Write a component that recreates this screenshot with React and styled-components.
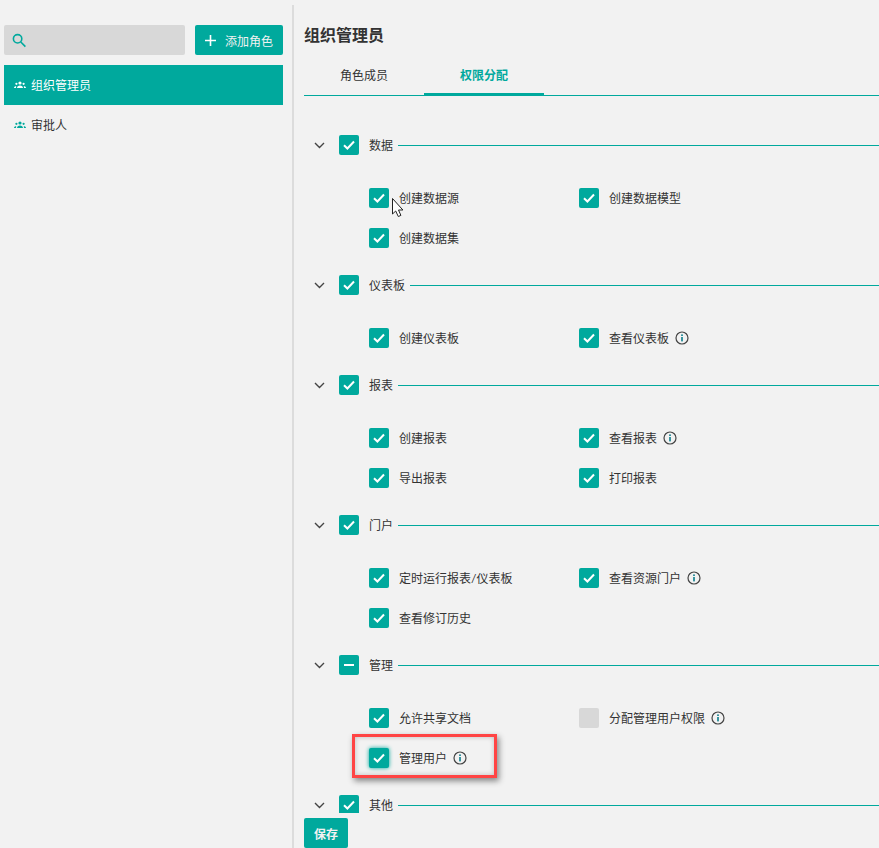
import React from "react";
import styled, { createGlobalStyle } from "styled-components";

const TEAL = "#00a99d";
const Global = createGlobalStyle`
  html, body { margin: 0; padding: 0; background: #f2f2f2; height: 848px; overflow: hidden; }
  body { font-family: "Lato", "Noto Sans CJK SC", sans-serif; font-size: 12px; color: #333; }
  * { box-sizing: border-box; }
`;
const Page = styled.div`position: relative; display: flex; width: 879px; height: 848px; overflow: hidden;`;
const Side = styled.aside`width: 294px; height: 848px; margin-top: 5px; padding: 20px 9px 0 4px; border-right: 2px solid #dcdcdc;`;
const SideTop = styled.div`display: flex; gap: 10px; margin-bottom: 10px;`;
const Search = styled.div`flex: 1; height: 30px; background: #d8d8d8; border-radius: 2px; display: flex; align-items: center; padding-left: 8px; color: ${TEAL};`;
const AddButton = styled.button`width: 88px; height: 30px; padding: 0 0 0 10px; display: flex; align-items: center; gap: 9px; border: 0; border-radius: 2px; background: ${TEAL}; color: #f2f2f2; font: inherit;`;
const RoleRow = styled.div`height: 40px; display: flex; align-items: center; gap: 5px; padding: 0 0 2px 10px; background: ${p => p.$active ? TEAL : "transparent"}; color: ${p => p.$active ? "#fff" : "#333"};`;
const RoleIcon = styled.svg`width: 12px; height: 12px; flex: none; color: ${p => p.$active ? "#fff" : TEAL};`;
const Main = styled.main`flex: 1; min-width: 0; padding: 24px 0 0 10px; display: flex; flex-direction: column;`;
const Title = styled.h1`margin: 0; font-size: 16px; line-height: 22px; font-weight: 700; color: #333;`;
const Tabs = styled.div`display: flex; height: 40px; margin-top: 10px; border-bottom: 1px solid ${TEAL};`;
const Tab = styled.div`width: 120px; height: 40px; flex: none; text-align: center; padding-top: 11px; line-height: 18px; font-weight: ${p => p.$active ? 700 : 400}; color: ${p => p.$active ? TEAL : "#333"}; border-bottom: ${p => p.$active ? `3px solid ${TEAL}` : "none"};`;
const Scroller = styled.div`height: 717px; flex: none; overflow: hidden; padding-top: 39px;`;
const Section = styled.section`margin-bottom: 7px;`;
const Head = styled.div`height: 20px; display: flex; align-items: center; padding-left: 10px;`;
const Chevron = styled.svg`width: 11px; height: 7px; margin-right: 14px; flex: none;`;
const Box = styled.div`width: 20px; height: 20px; flex: none; border-radius: 2px; background: ${p => p.$off ? "#d8d8d8" : TEAL}; display: flex; align-items: center; justify-content: center; box-shadow: ${p => p.$glow ? `0 0 4px ${TEAL}` : "none"};`;
const HeadLabel = styled.span`margin-left: 10px; line-height: 20px; padding-top: 2px;`;
const Rule = styled.div`flex: 1; height: 1px; background: ${TEAL}; margin-left: 5px;`;
const Items = styled.div`display: grid; grid-template-columns: repeat(2, 210px); grid-auto-rows: 40px; margin: 33px 0 0 65px;`;
const Item = styled.div`display: flex; align-items: center; height: 20px;`;
const ItemLabel = styled.span`margin-left: 10px; line-height: 20px; padding-top: 2px;`;
const Info = styled.svg`width: 14px; height: 14px; margin-left: 6px; flex: none;`;
const Save = styled.button`width: 44px; height: 30px; flex: none; margin-top: 5px; border: 0; border-radius: 2px; background: ${TEAL}; color: #f2f2f2; font: inherit; font-weight: 700; padding: 0;`;
const Highlight = styled.div`position: absolute; left: 352px; top: 734px; width: 145px; height: 44px; border: 3px solid #f44; box-shadow: 2px 3px 6px rgba(0,0,0,.45), inset 0 0 5px rgba(0,0,0,.22); pointer-events: none;`;
const Cursor = styled.svg`position: absolute; left: 391px; top: 197px; width: 14px; height: 21px;`;

const Check = () => <svg width="12" height="10" viewBox="0 0 12 10"><path d="M1 5.2 4.4 8.5 11 1.5" fill="none" stroke="#fff" strokeWidth="2" /></svg>;
const Dash = () => <svg width="10" height="2" viewBox="0 0 10 2"><rect width="10" height="2" fill="#fff" /></svg>;

const sections = [
  { name: "数据", items: [["创建数据源"], ["创建数据模型"], ["创建数据集"]] },
  { name: "仪表板", items: [["创建仪表板"], ["查看仪表板", "i"]] },
  { name: "报表", items: [["创建报表"], ["查看报表", "i"], ["导出报表"], ["打印报表"]] },
  { name: "门户", items: [["定时运行报表/仪表板"], ["查看资源门户", "i"], ["查看修订历史"]] },
  { name: "管理", partial: true, items: [["允许共享文档"], ["分配管理用户权限", "i", "off"], ["管理用户", "i", null, true]] },
  { name: "其他", items: [] },
];

const People = ({ active }) => (
  <RoleIcon $active={active} viewBox="0 0 12 12" fill="currentColor">
    <circle cx="6" cy="5" r="1.6" /><circle cx="2.4" cy="5.8" r="1.1" /><circle cx="9.6" cy="5.8" r="1.1" />
    <path d="M3 10c0-1.5 1.3-2.5 3-2.5s3 1 3 2.5zM0 10c0-1.2.8-1.8 2.2-1.8L2 10zM12 10c0-1.2-.8-1.8-2.2-1.8l.2 1.8z" />
  </RoleIcon>
);
const InfoIcon = () => (
  <Info viewBox="0 0 14 14">
    <circle cx="7" cy="7" r="6" fill="none" stroke="#444" strokeWidth="1.2" />
    <rect x="6.2" y="6" width="1.6" height="4.4" fill="#0a7d8c" /><rect x="6.2" y="3.4" width="1.6" height="1.6" fill="#0a7d8c" />
  </Info>
);

export default function App() {
  return (
    <Page>
      <Global />
      <Side>
        <SideTop>
          <Search>
            <svg width="15" height="15" viewBox="0 0 15 15" fill="none" stroke="currentColor" strokeWidth="1.6"><circle cx="5.6" cy="5.8" r="4.2" /><path d="M8.8 9l4.6 4.6" /></svg>
          </Search>
          <AddButton>
            <svg width="11" height="11" viewBox="0 0 11 11"><path d="M5.5 0v11M0 5.5h11" stroke="#fff" strokeWidth="1.6" /></svg>
            添加角色
          </AddButton>
        </SideTop>
        <RoleRow $active><People active />组织管理员</RoleRow>
        <RoleRow><People />审批人</RoleRow>
      </Side>
      <Main>
        <Title>组织管理员</Title>
        <Tabs><Tab>角色成员</Tab><Tab $active>权限分配</Tab></Tabs>
        <Scroller>
          {sections.map(s => (
            <Section key={s.name}>
              <Head>
                <Chevron viewBox="0 0 11 7"><path d="M1 1l4.5 4.5L10 1" fill="none" stroke="#444" strokeWidth="1.4" /></Chevron>
                <Box>{s.partial ? <Dash /> : <Check />}</Box>
                <HeadLabel>{s.name}</HeadLabel>
                <Rule />
              </Head>
              {s.items.length > 0 && (
                <Items>
                  {s.items.map(([label, info, off, glow]) => (
                    <Item key={label}>
                      <Box $off={off} $glow={glow}>{!off && <Check />}</Box>
                      <ItemLabel>{label}</ItemLabel>
                      {info && <InfoIcon />}
                    </Item>
                  ))}
                </Items>
              )}
            </Section>
          ))}
        </Scroller>
        <Save>保存</Save>
      </Main>
      <Highlight />
      <Cursor viewBox="0 0 14 21"><path d="M1.5 1.5V17l3.2-3 2.6 5.5 2.6-1.1-2.4-5.4h4.4z" fill="#fff" stroke="#222" strokeWidth="1" /></Cursor>
    </Page>
  );
}
